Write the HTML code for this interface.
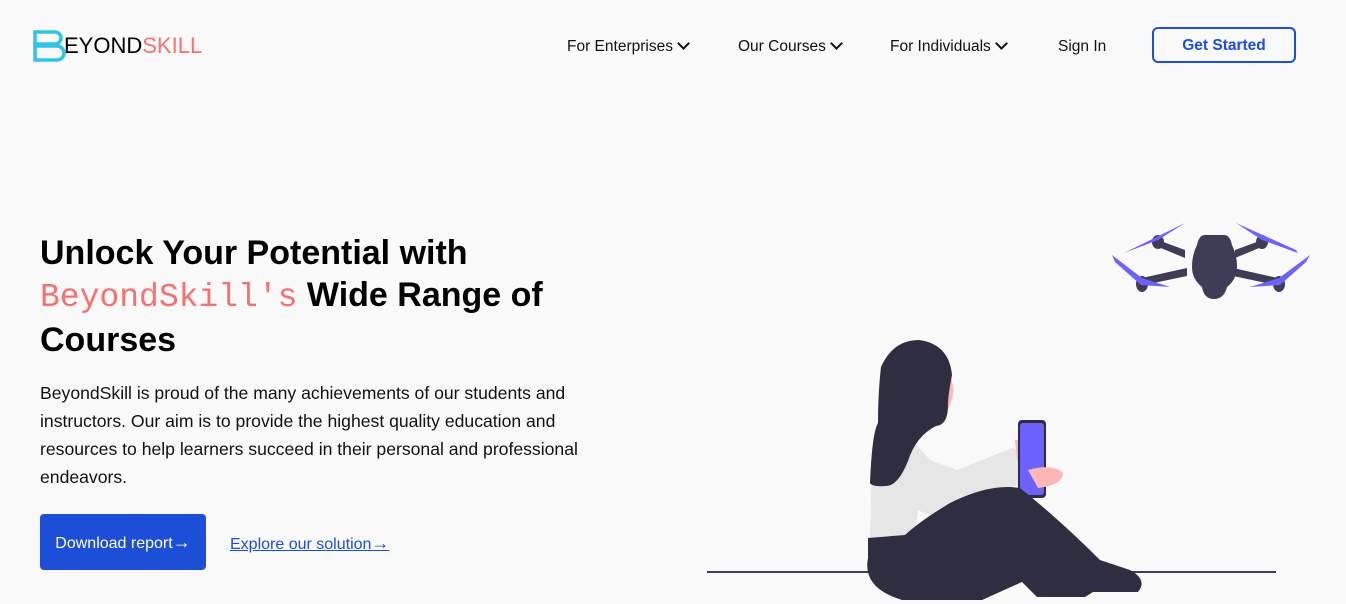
<!DOCTYPE html>
<html><head><meta charset="utf-8"><style>
*{margin:0;padding:0;box-sizing:border-box}
body{width:1346px;height:604px;overflow:hidden;background:#f9f9f9;font-family:"Liberation Sans",sans-serif;position:relative;color:#000}
.logo{position:absolute;left:32px;top:29px;display:flex;align-items:center}
.logo span{font-size:22px;letter-spacing:0px}
.nav{position:absolute;top:38px;font-size:15.5px;color:#111}
.chev{display:inline-block;width:9px;height:9px;border-right:2.2px solid #111;border-bottom:2.2px solid #111;transform:rotate(45deg);margin-left:6px;position:relative;top:-3px}
.gs{position:absolute;left:1152px;top:27px;width:144px;height:36px;border:2px solid #1d4ed8;border-radius:6px;color:#1d4ed8;font-weight:bold;font-size:15.5px;text-align:center;line-height:34px}
h1{position:absolute;left:40px;top:232px;font-size:34px;line-height:42px;font-weight:bold;width:580px}
h1 .m{font-family:"Liberation Mono",monospace;color:#f87171;font-weight:normal;font-size:33px}
p{position:absolute;left:40px;top:379px;width:580px;font-size:17.6px;line-height:28px;color:#111}
.btn{position:absolute;left:40px;top:514px;width:166px;height:56px;background:#1d4ed8;border-radius:4px;color:#fff;font-size:16px;line-height:56px;text-align:center}
.lnk{position:absolute;left:230px;top:533px;font-size:16px;color:#1d4ed8;text-decoration:underline}
.ar{font-size:18px}
</style></head><body>
<div class="logo">
<svg width="34" height="34" viewBox="0 0 34 34"><path d="M3 3h20a6 6 0 0 1 0 12H3z M3 17h22a7 7 0 0 1 0 14H3z" fill="none" stroke="#2ec4e6" stroke-width="3.5"/><path d="M3 16h24" stroke="#2ec4e6" stroke-width="3"/></svg>
<span style="margin-left:-2px">EYOND</span><span style="color:#f87171">SKILL</span>
</div>
<div class="nav" style="left:567px">For Enterprises<i class="chev"></i></div>
<div class="nav" style="left:738px">Our Courses<i class="chev"></i></div>
<div class="nav" style="left:890px">For Individuals<i class="chev"></i></div>
<div class="nav" style="left:1058px">Sign In</div>
<div class="gs">Get Started</div>
<h1>Unlock Your Potential with <span class="m">BeyondSkill's</span> Wide Range of Courses</h1>
<p>BeyondSkill is proud of the many achievements of our students and instructors. Our aim is to provide the highest quality education and resources to help learners succeed in their personal and professional endeavors.</p>
<div class="btn">Download report<span class="ar">→</span></div>
<div class="lnk">Explore our solution<span class="ar">→</span></div>
<svg style="position:absolute;left:0;top:0" width="1346" height="604">
<g fill="#3f3d56">
<path d="M1196 235h28q6 0 8 10 5 10 5 22 0 12-10 20 -3 12-13 12 -10 0-12-12 -10-8-10-20 0-12 5-22 2-10 8-10z"/>
<path d="M1185 250L1158 240 1156 246 1185 258z M1235 250L1262 240 1264 246 1235 258z M1187 268L1142 278 1144 285 1187 276z M1233 268L1278 278 1276 285 1233 276z"/>
<ellipse cx="1158" cy="242" rx="6" ry="7"/><ellipse cx="1262" cy="242" rx="6" ry="7"/>
<ellipse cx="1142" cy="284" rx="6" ry="8"/><ellipse cx="1279" cy="284" rx="6" ry="8"/>
</g>
<g fill="#6c63ff">
<path d="M1158 240L1124 253 1126 252 1185 223z M1262 240L1298 253 1296 250 1236 223z M1142 278L1112 255 1115 262 1141 285 1170 287z M1279 278L1310 255 1306 262 1280 285 1250 287z"/>
</g>
<rect x="707" y="571" width="569" height="2" fill="#3f3d56"/>
<ellipse cx="925" cy="390" rx="28" ry="33" fill="#ffb6b6"/>
<path d="M872 450l40-10 18 20 27 10 55-22 18 5 -2 30-50 12 20 5 -60 20-20-10-5 35H870z" fill="#e6e6e6"/>
<path d="M1015 440q22 0 22 10 0 10-20 10z" fill="#ffb6b6"/>
<rect x="1018" y="420" width="28" height="78" rx="4" fill="#2f2e41"/>
<rect x="1020" y="423" width="24" height="72" rx="3" fill="#6c63ff"/>
<path d="M1028 470q25-7 35 3 0 12-25 15z" fill="#ffb6b6"/>
<path d="M868 538l0 20q-6 30 34 42h80l40-18 15 15h48l8-5h45q10-12-8-22l-30-10q-40-40-80-72 -30-5-70 15 -30 18-45 32z" fill="#2f2e41"/>
<path d="M881 367q12-27 38-27 30 4 33 35 -4 20-4 30 0 20-12 21 -20 10-28 35 -10 25-22 25 -14 1-16-3 2-50 8-60 0-30 3-56z" fill="#2f2e41"/>
</svg>
</body></html>
